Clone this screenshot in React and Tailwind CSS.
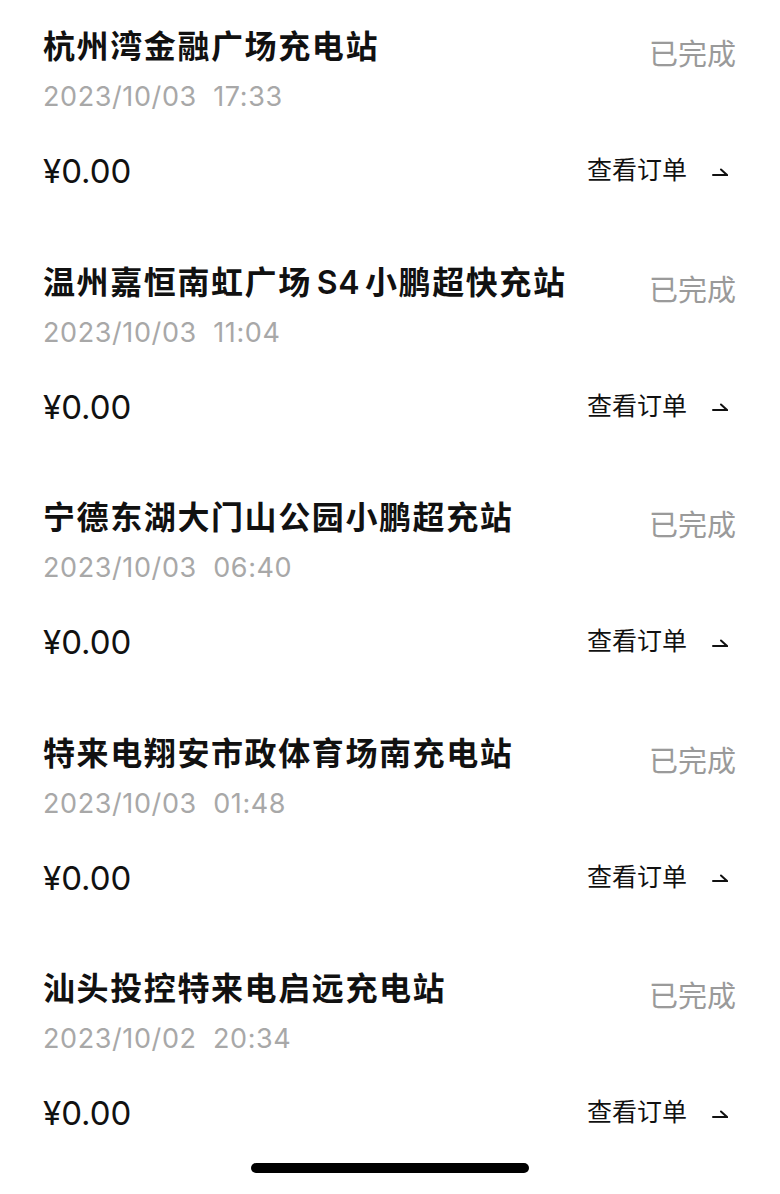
import React from "react";

const orders = [
  { name: "杭州湾金融广场充电站", time: "2023/10/03  17:33" },
  { name: "温州嘉恒南虹广场S4小鹏超快充站", time: "2023/10/03  11:04" },
  { name: "宁德东湖大门山公园小鹏超充站", time: "2023/10/03  06:40" },
  { name: "特来电翔安市政体育场南充电站", time: "2023/10/03  01:48" },
  { name: "汕头投控特来电启远充电站", time: "2023/10/02  20:34" },
];

const font = { fontFamily: 'Inter, "Noto Sans CJK SC", sans-serif' };

const Harpoon = () => (
  <svg width="16" height="10" viewBox="0 0 16 10" fill="none" stroke="#111" strokeWidth="2" strokeLinecap="round">
    <path d="M1 8h14L9 2.5" />
  </svg>
);

// latin runs inside a Chinese title get a little air on both sides
const Title = ({ text }) =>
  text.split(/([A-Za-z0-9]+)/).map((part, i) =>
    /^[A-Za-z0-9]+$/.test(part) ? (
      <span key={i} className="mx-[5px] tracking-[0.5px]">{part}</span>
    ) : (
      <span key={i}>{part}</span>
    )
  );

const OrderItem = ({ name, time }) => (
  <div className="pt-[27px] pb-[44.5px]">
    <div className="flex items-start justify-between">
      <div>
        <div className="h-[40px] leading-[40px] text-[32px] font-semibold text-[#111] tracking-[1.6px] whitespace-pre">
          <Title text={name} />
        </div>
        <div className="mt-[12px] h-[36px] leading-[36px] text-[27px] text-[#a8a8a8] tracking-[0.6px] whitespace-pre">
          {time}
        </div>
      </div>
      <div className="mt-[8px] h-[40px] leading-[40px] text-[29px] text-[#9a9a9a]">已完成</div>
    </div>
    <div className="mt-[36px] h-[40px] flex items-center justify-between">
      <div className="text-[33px] text-[#111] leading-[40px]">¥0.00</div>
      <div className="flex items-center mr-[8px]">
        <span className="text-[25px] text-[#111]">查看订单</span>
        <span className="ml-[25px] mt-[1px] flex">
          <Harpoon />
        </span>
      </div>
    </div>
  </div>
);

export default function App() {
  return (
    <div className="w-[780px] h-[1194px] bg-white flex flex-col overflow-hidden" style={font}>
      <div className="pl-[43px] pr-[44px]">
        {orders.map((o) => (
          <OrderItem key={o.time} name={o.name} time={o.time} />
        ))}
      </div>
      <div className="flex-1 flex justify-center">
        <div className="mt-[-15px] w-[278px] h-[10px] rounded-full bg-black" />
      </div>
    </div>
  );
}
